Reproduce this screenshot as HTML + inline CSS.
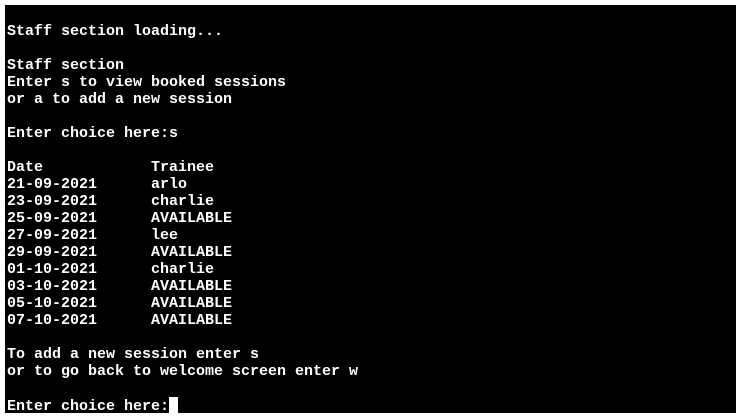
<!DOCTYPE html>
<html><head><style>
html,body{margin:0;padding:0;background:#fff;width:741px;height:420px;overflow:hidden}
#t{position:absolute;left:5px;top:5px;width:731px;height:408px;background:#000}
pre{margin:0;position:absolute;left:2px;top:18px;color:#fff;font:bold 15px/17px "Courier New","Liberation Mono",monospace;}
.c{display:inline-block;width:9px;height:16px;background:#fff;vertical-align:-3px}
</style></head><body><div id="t"><pre>Staff section loading...

Staff section
Enter s to view booked sessions
or a to add a new session

Enter choice here:s

Date            Trainee
21-09-2021      arlo
23-09-2021      charlie
25-09-2021      AVAILABLE
27-09-2021      lee
29-09-2021      AVAILABLE
01-10-2021      charlie
03-10-2021      AVAILABLE
05-10-2021      AVAILABLE
07-10-2021      AVAILABLE

To add a new session enter s
or to go back to welcome screen enter w

Enter choice here:<span class="c"></span></pre></div></body></html>
